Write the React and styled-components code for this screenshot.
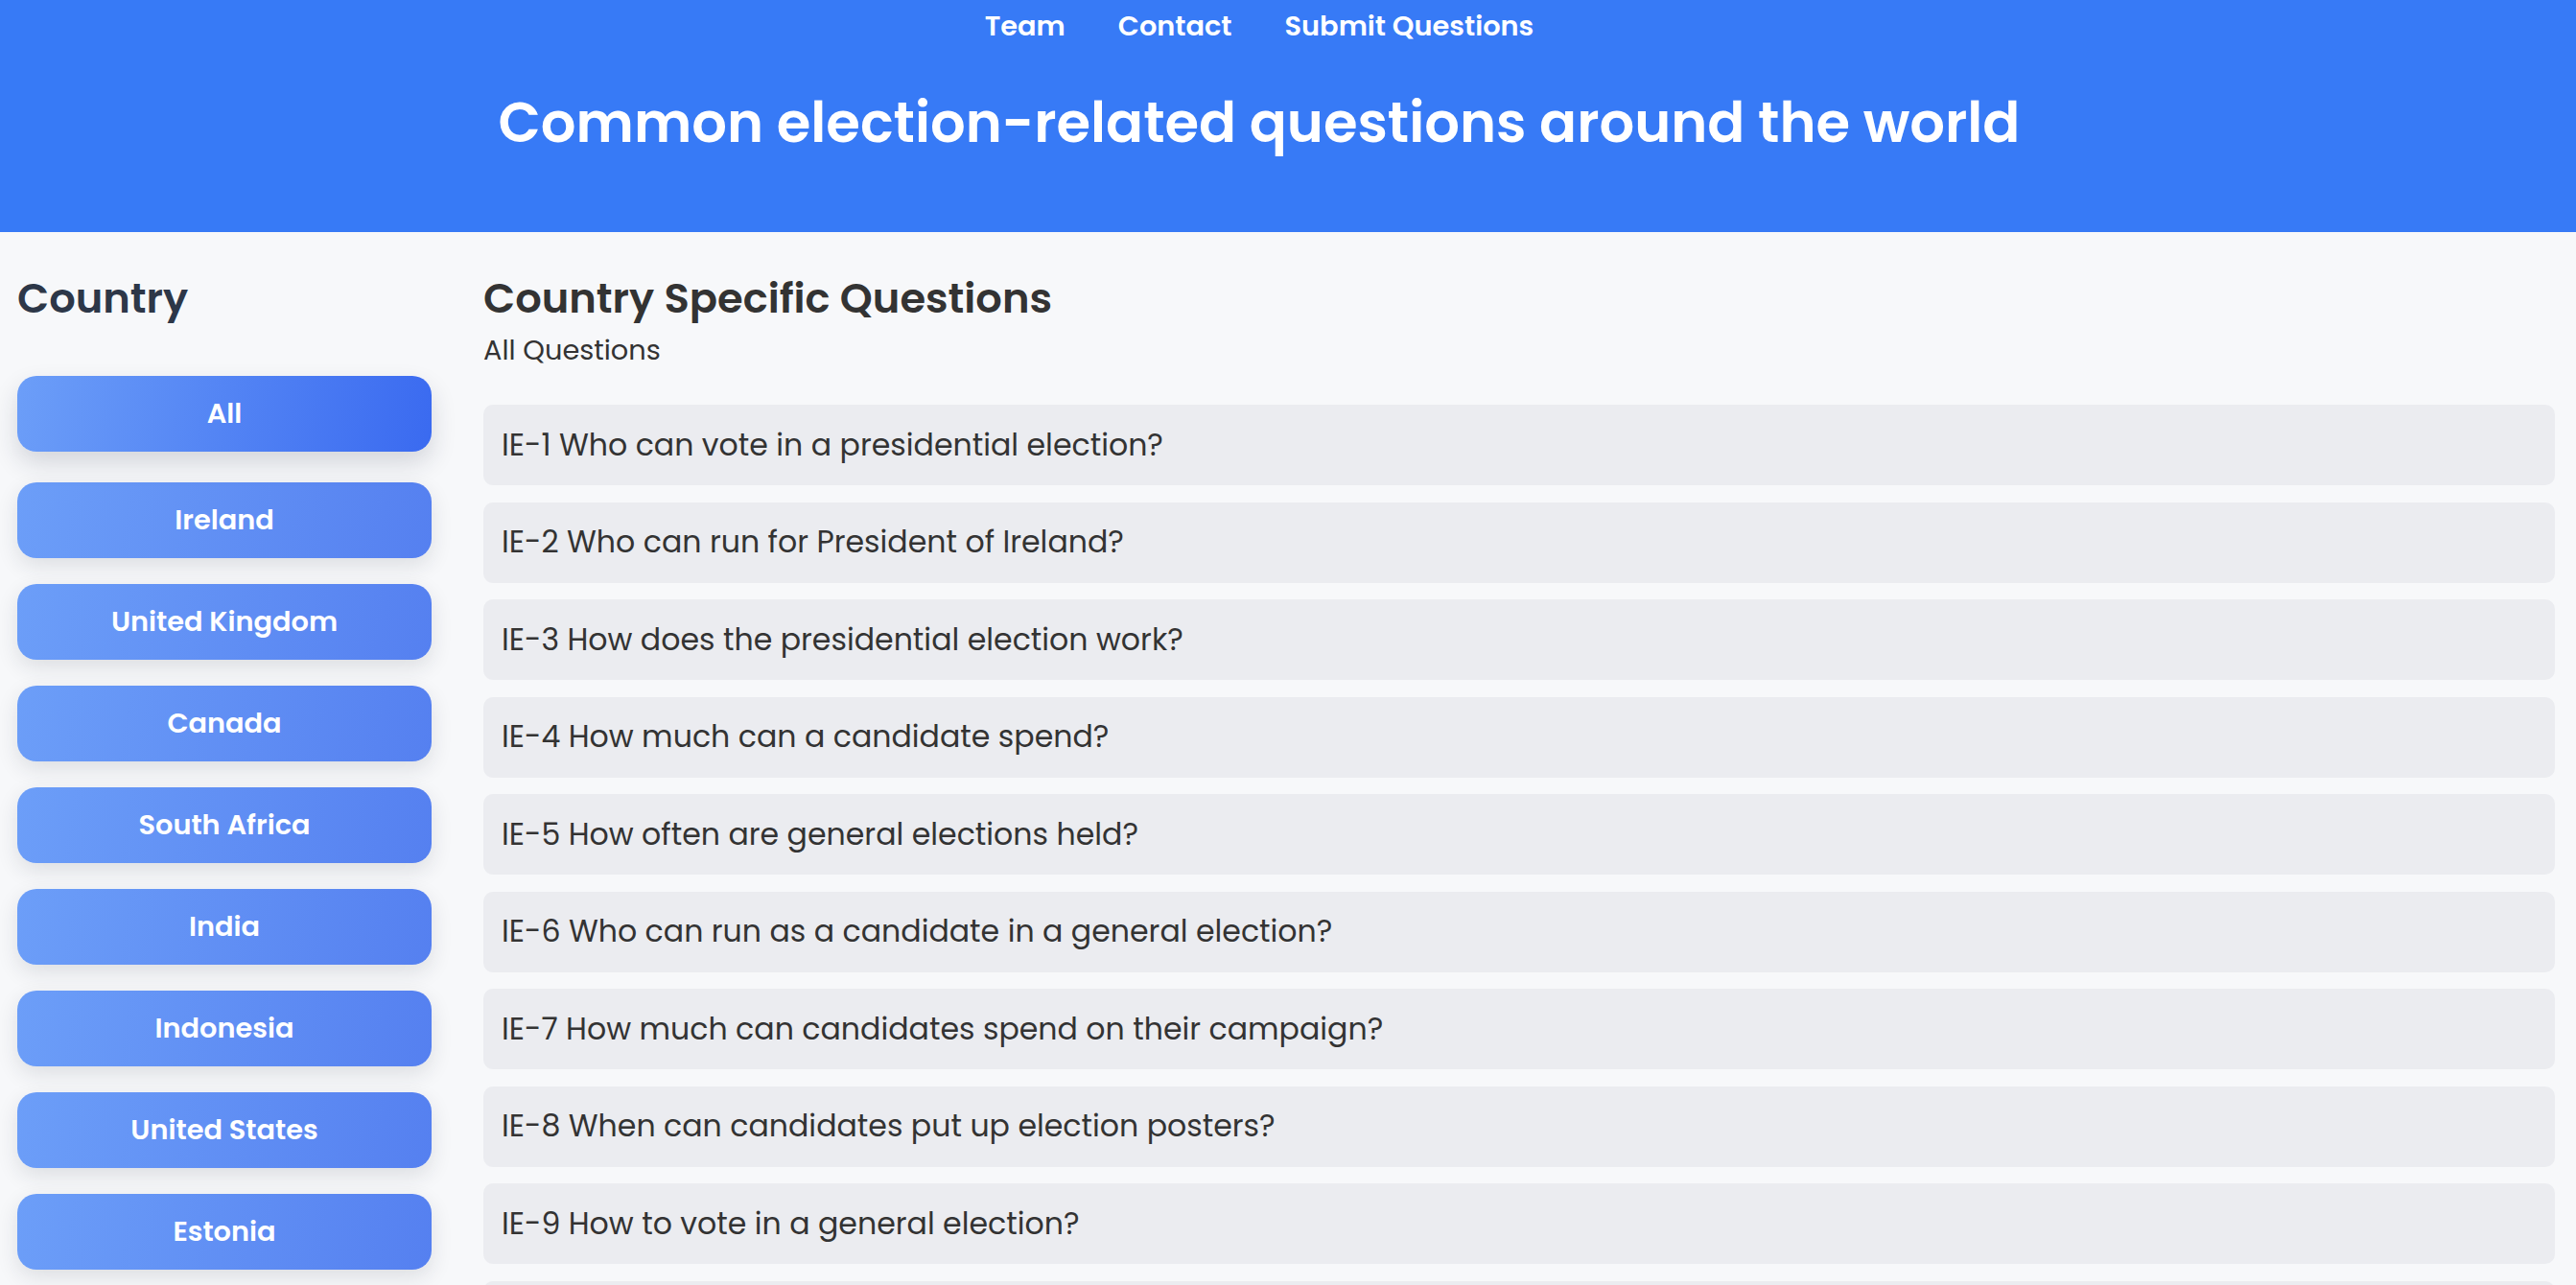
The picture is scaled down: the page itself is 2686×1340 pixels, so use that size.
import React from "react";
import styled, { createGlobalStyle, css } from "styled-components";

const countries = [
  "All",
  "Ireland",
  "United Kingdom",
  "Canada",
  "South Africa",
  "India",
  "Indonesia",
  "United States",
  "Estonia",
];

const questions = [
  "IE-1 Who can vote in a presidential election?",
  "IE-2 Who can run for President of Ireland?",
  "IE-3 How does the presidential election work?",
  "IE-4 How much can a candidate spend?",
  "IE-5 How often are general elections held?",
  "IE-6 Who can run as a candidate in a general election?",
  "IE-7 How much can candidates spend on their campaign?",
  "IE-8 When can candidates put up election posters?",
  "IE-9 How to vote in a general election?",
  "IE-10 How are votes counted?",
];

function App() {
  return (
    <>
      <GlobalStyle />
      <Header>
        <Nav>
          <NavLink href="#team">Team</NavLink>
          <NavLink href="#contact">Contact</NavLink>
          <NavLink href="#submit">Submit Questions</NavLink>
        </Nav>
        <Title>Common election-related questions around the world</Title>
      </Header>
      <Layout>
        <Sidebar>
          <SideHeading>Country</SideHeading>
          <ButtonList>
            {countries.map((name, i) => (
              <CountryButton key={name} $active={i === 0}>
                {name}
              </CountryButton>
            ))}
          </ButtonList>
        </Sidebar>
        <Main>
          <SectionTitle>Country Specific Questions</SectionTitle>
          <Subtitle>All Questions</Subtitle>
          <QuestionList>
            {questions.map((q) => (
              <QuestionCard key={q}>{q}</QuestionCard>
            ))}
          </QuestionList>
        </Main>
      </Layout>
    </>
  );
}

export default App;

const GlobalStyle = createGlobalStyle`
  * {
    box-sizing: border-box;
  }

  body {
    margin: 0;
    background: #f7f8fa;
    font-family: "Poppins", "Inter", "Noto Sans", sans-serif;
    color: #333;
  }
`;

const Header = styled.header`
  height: 242px;
  background: #377af6;
  padding: 9px 60px 0 0;
  display: flex;
  flex-direction: column;
  align-items: center;
`;

const Nav = styled.nav`
  display: flex;
  gap: 55px;
`;

const NavLink = styled.a`
  color: #fff;
  text-decoration: none;
  font-size: 28.8px;
  font-weight: 600;
  line-height: 36px;
`;

const Title = styled.h1`
  margin: 49px 0 0;
  color: #fff;
  font-size: 57.6px;
  font-weight: 600;
  line-height: 1.2;
`;

const Layout = styled.div`
  display: grid;
  grid-template-columns: 432px 1fr;
  column-gap: 54px;
  padding: 42px 22px 0 18px;
`;

const Sidebar = styled.aside`
  display: flex;
  flex-direction: column;
`;

const SideHeading = styled.h2`
  margin: 0 0 58px;
  font-size: 43.2px;
  font-weight: 600;
  line-height: 55px;
  color: #2d3748;
`;

const ButtonList = styled.div`
  display: flex;
  flex-direction: column;
  gap: 27px;
`;

const CountryButton = styled.button`
  height: 79px;
  border: none;
  border-radius: 20px;
  font-family: inherit;
  font-size: 28.8px;
  font-weight: 600;
  color: #fff;
  cursor: pointer;
  background: linear-gradient(100deg, #6c9ef8 0%, #5580f0 100%);
  box-shadow: 0 8px 22px rgba(30, 40, 60, 0.12);

  ${(p) =>
    p.$active &&
    css`
      transform: translateY(-5px);
      background: linear-gradient(100deg, #6c9ef8 0%, #3a6af0 100%);
      box-shadow: 0 12px 26px rgba(30, 40, 60, 0.16);
    `}
`;

const Main = styled.main`
  display: flex;
  flex-direction: column;
`;

const SectionTitle = styled.h2`
  margin: 0;
  font-size: 43.2px;
  font-weight: 600;
  line-height: 55px;
  color: #333;
`;

const Subtitle = styled.p`
  margin: 9px 0 0;
  font-size: 28.8px;
  line-height: 34px;
  color: #333;
`;

const QuestionList = styled.div`
  display: flex;
  flex-direction: column;
  gap: 17.5px;
  margin-top: 40px;
`;

const QuestionCard = styled.div`
  height: 84px;
  display: flex;
  align-items: center;
  padding: 0 19px;
  border-radius: 10px;
  background: #ebecf0;
  font-size: 31.6px;
  color: #333;
  cursor: pointer;
`;
